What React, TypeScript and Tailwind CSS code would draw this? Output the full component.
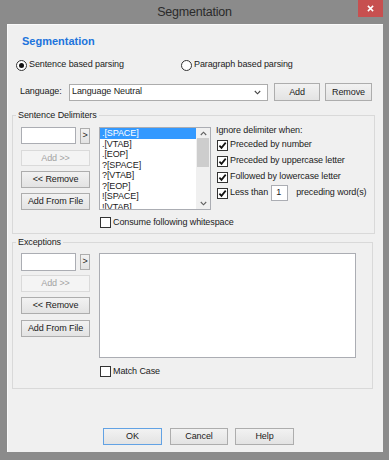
import type { ReactNode } from 'react';

const delimiters = ['.[SPACE]', '.[VTAB]', '.[EOP]', '?[SPACE]', '?[VTAB]', '?[EOP]', '![SPACE]', '![VTAB]'];
const ignoreRules = ['Preceded by number', 'Preceded by uppercase letter', 'Followed by lowercase letter'];

function Btn({
  children,
  className = '',
  disabled = false,
  primary = false,
}: {
  children: ReactNode;
  className?: string;
  disabled?: boolean;
  primary?: boolean;
}) {
  return (
    <button
      disabled={disabled}
      className={`flex shrink-0 items-center justify-center border leading-none ${
        disabled
          ? 'border-[#dadada] bg-[#f4f4f4] text-[#a3a3a3]'
          : primary
            ? 'border-[#62a2e4] bg-linear-to-b from-[#f2f2f2] to-[#e3e3e3]'
            : 'border-[#adadad] bg-linear-to-b from-[#f2f2f2] to-[#e3e3e3]'
      } ${className}`}
    >
      {children}
    </button>
  );
}

function Check({ checked = false }: { checked?: boolean }) {
  return (
    <span className="flex h-[11px] w-[11px] shrink-0 items-center justify-center border border-[#333] bg-white">
      {checked && (
        <svg viewBox="0 0 9 9" className="h-[9px] w-[9px]">
          <path d="M1.4 4.6 L3.5 6.9 L7.7 1.6" fill="none" stroke="#111" strokeWidth="1.7" />
        </svg>
      )}
    </span>
  );
}

function Radio({ checked = false }: { checked?: boolean }) {
  return (
    <span className="flex h-[11px] w-[11px] shrink-0 items-center justify-center rounded-full border border-[#333] bg-white">
      {checked && <span className="h-[5px] w-[5px] rounded-full bg-[#111]" />}
    </span>
  );
}

function TextBox({ className = '', children }: { className?: string; children?: ReactNode }) {
  return <div className={`shrink-0 border border-[#abadb3] bg-white ${className}`}>{children}</div>;
}

export default function App() {
  return (
    <div className="flex h-[460px] w-[389px] flex-col bg-[#8b8b8b] font-['Liberation_Sans',Arial,sans-serif] text-[9px] tracking-[-0.1px] text-[#1b1b1b]">
      {/* title bar */}
      <div className="grid h-[24px] shrink-0 grid-cols-[1fr_auto_1fr]">
        <div />
        <div className="pt-[4px] text-[12.5px] leading-[16px] tracking-[-0.2px] text-[#2a2a2a]">Segmentation</div>
        <div className="flex justify-end pr-[6px]">
          <button className="flex h-[17px] w-[25px] items-center justify-center bg-[#c75050]">
            <svg viewBox="0 0 8 8" className="h-[7px] w-[7px]">
              <path d="M1 1L7 7M7 1L1 7" stroke="#fff" strokeWidth="1.7" />
            </svg>
          </button>
        </div>
      </div>

      {/* client area */}
      <div className="mb-[8px] ml-[7px] mr-[6px] flex flex-1 flex-col border-l border-t border-[#fafafa] bg-[#f0f0f0]">
        <div className="pl-[14px] pt-[9px] text-[11px] font-bold leading-[14px] tracking-normal text-[#2174dc]">
          Segmentation
        </div>

        {/* parsing mode */}
        <div className="mt-[11px] flex h-[12px] items-center pl-[8px]">
          <label className="flex w-[165px] items-center gap-[2px]">
            <Radio checked />
            Sentence based parsing
          </label>
          <label className="flex items-center gap-[2px]">
            <Radio />
            Paragraph based parsing
          </label>
        </div>

        {/* language */}
        <div className="mt-[12px] flex h-[18px] items-center pl-[12px]">
          <span className="w-[49px]">Language:</span>
          <div className="flex h-[17px] w-[199px] items-center justify-between border border-[#acacac] bg-white pl-[2px] pr-[6px]">
            Language Neutral
            <svg viewBox="0 0 7 5" className="h-[5px] w-[7px]">
              <path d="M0.8 1 L3.5 3.8 L6.2 1" fill="none" stroke="#444" strokeWidth="1.1" />
            </svg>
          </div>
          <Btn className="ml-[6px] h-[18px] w-[46px]">Add</Btn>
          <Btn className="ml-[5px] h-[18px] w-[47px]">Remove</Btn>
        </div>

        {/* sentence delimiters */}
        <fieldset className="mx-[4px] mt-[9px] w-[361px] border border-[#d9d9d9] px-[8px] pb-[3px] pt-[6px]">
          <legend className="ml-[-5px] px-[2px] leading-[11px]">Sentence Delimiters</legend>
          <div className="flex items-start">
            <div className="flex w-[69px] flex-col">
              <div className="flex items-center gap-[4px]">
                <TextBox className="h-[17px] w-[55px]" />
                <Btn className="h-[16px] w-[10px]">&gt;</Btn>
              </div>
              <Btn disabled className="mt-[6px] h-[16px] w-[69px]">
                Add &gt;&gt;
              </Btn>
              <Btn className="mt-[5px] h-[17px] w-[69px]">&lt;&lt; Remove</Btn>
              <Btn className="mt-[5px] h-[17px] w-[69px]">Add From File</Btn>
            </div>

            <div className="ml-[9px] flex w-[112px] flex-col">
              <TextBox className="flex h-[83px]">
                <div className="flex-1 overflow-hidden">
                  {delimiters.map((d, i) => (
                    <div
                      key={d}
                      className={`h-[10.5px] pl-[2px] leading-[10.5px] ${i === 0 ? 'bg-[#3399ff] text-white' : ''}`}
                    >
                      {d}
                    </div>
                  ))}
                </div>
                <div className="flex w-[14px] flex-col items-center bg-[#f0f0f0]">
                  <div className="flex h-[10px] items-center">
                    <svg viewBox="0 0 7 5" className="h-[5px] w-[7px]">
                      <path d="M0.8 4 L3.5 1.2 L6.2 4" fill="none" stroke="#606060" strokeWidth="1.1" />
                    </svg>
                  </div>
                  <div className="h-[29px] w-[12px] bg-[#cdcdcd]" />
                  <div className="flex-1" />
                  <div className="flex h-[12px] items-center">
                    <svg viewBox="0 0 7 5" className="h-[5px] w-[7px]">
                      <path d="M0.8 1 L3.5 3.8 L6.2 1" fill="none" stroke="#606060" strokeWidth="1.1" />
                    </svg>
                  </div>
                </div>
              </TextBox>
              <label className="mt-[6px] flex items-center gap-[2px] whitespace-nowrap pl-[1px]">
                <Check />
                Consume following whitespace
              </label>
            </div>

            <div className="-mt-[2px] ml-[5px] flex flex-col">
              <div className="leading-[11px]">Ignore delimiter when:</div>
              <div className="mt-[3px] flex flex-col gap-[4px] pl-[1px]">
                {ignoreRules.map((r) => (
                  <label key={r} className="flex h-[12px] items-center gap-[2px] whitespace-nowrap">
                    <Check checked />
                    {r}
                  </label>
                ))}
                <label className="flex h-[12px] items-center gap-[2px] whitespace-nowrap">
                  <Check checked />
                  Less than
                  <TextBox className="ml-[1px] flex h-[16px] w-[17px] items-center pl-[4px]">1</TextBox>
                  <span className="ml-[6px]">preceding word(s)</span>
                </label>
              </div>
            </div>
          </div>
        </fieldset>

        {/* exceptions */}
        <fieldset className="mx-[4px] mt-[3px] w-[361px] border border-[#d9d9d9] px-[8px] pb-[10px] pt-[5px]">
          <legend className="ml-[-5px] px-[2px] leading-[11px]">Exceptions</legend>
          <div className="flex items-start">
            <div className="flex w-[69px] flex-col">
              <div className="flex items-center gap-[4px]">
                <TextBox className="h-[18px] w-[55px]" />
                <Btn className="h-[16px] w-[10px]">&gt;</Btn>
              </div>
              <Btn disabled className="mt-[4px] h-[17px] w-[69px]">
                Add &gt;&gt;
              </Btn>
              <Btn className="mt-[5px] h-[17px] w-[69px]">&lt;&lt; Remove</Btn>
              <Btn className="mt-[6px] h-[17px] w-[69px]">Add From File</Btn>
            </div>
            <div className="ml-[9px] flex flex-col">
              <TextBox className="h-[105px] w-[257px]" />
              <label className="mt-[7px] flex items-center gap-[2px] pl-[1px]">
                <Check />
                Match Case
              </label>
            </div>
          </div>
        </fieldset>

        {/* dialog buttons */}
        <div className="mt-[39px] flex pl-[95px]">
          <Btn primary className="h-[17px] w-[59px]">
            OK
          </Btn>
          <Btn className="ml-[8px] h-[17px] w-[58px]">Cancel</Btn>
          <Btn className="ml-[7px] h-[17px] w-[59px]">Help</Btn>
        </div>
      </div>
    </div>
  );
}
